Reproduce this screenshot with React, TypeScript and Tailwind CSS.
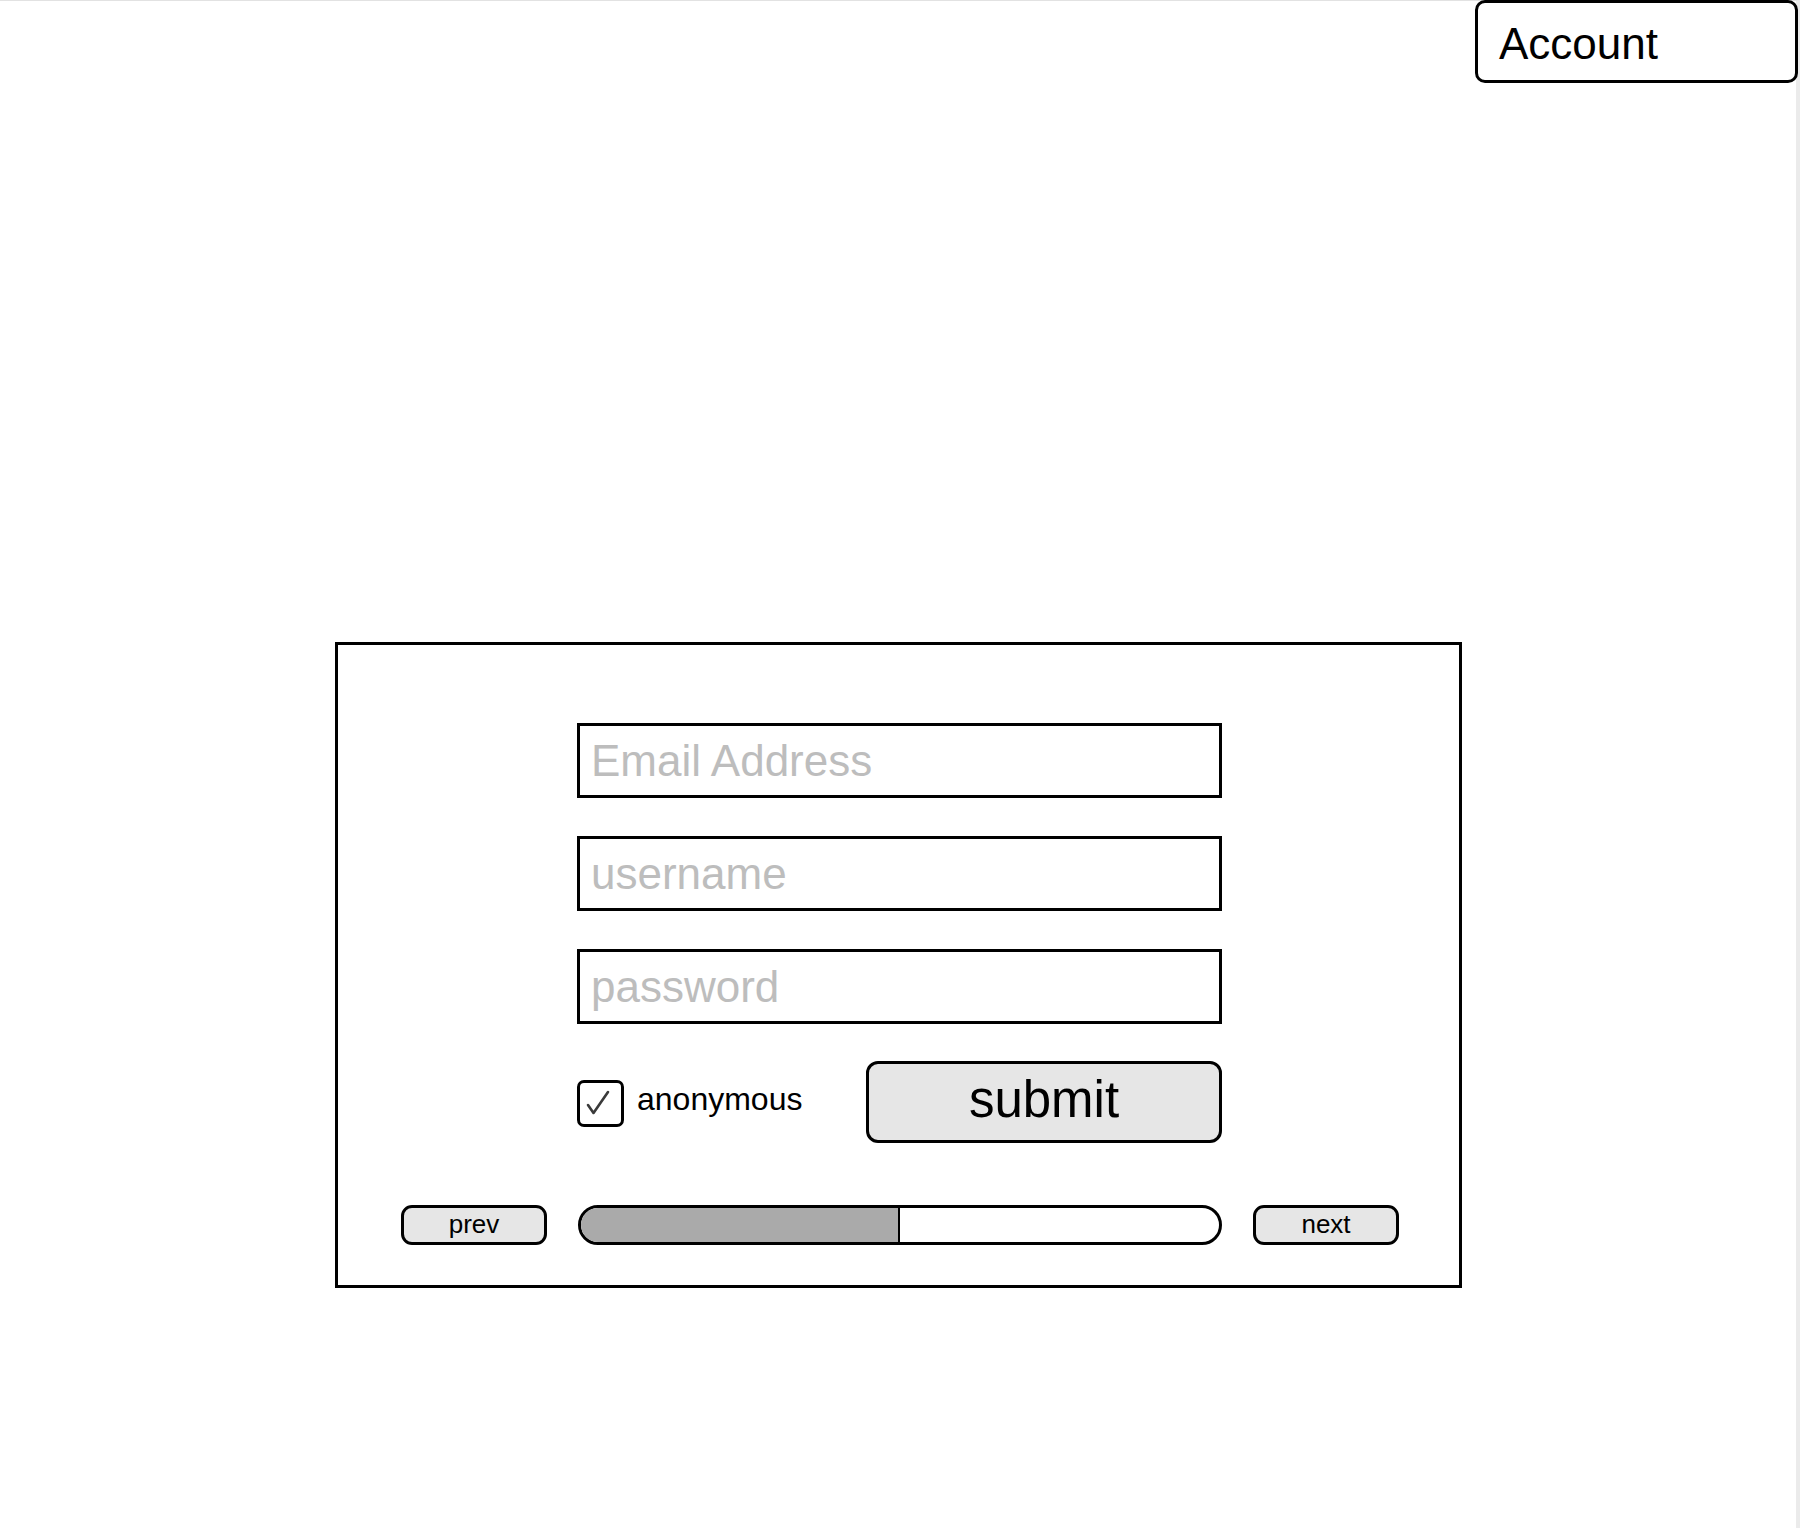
import React from 'react';

const font = { fontFamily: '"Liberation Sans", Arial, sans-serif' };

const TextField = ({ placeholder }: { placeholder: string }) => (
    <input
        type="text"
        placeholder={placeholder}
        className="w-[645px] h-[75px] border-[3px] border-black bg-white pl-[11px] text-[44px] text-black placeholder:text-[#bdbdbd] outline-none"
        style={font}
    />
);

const SmallButton = ({ label }: { label: string }) => (
    <button className="w-[146px] h-[40px] shrink-0 border-[3px] border-black rounded-[11px] bg-[#e6e6e6] text-[26px] leading-none text-black flex items-center justify-center pb-[2px]">
        {label}
    </button>
);

export default function App() {
    const [anon, setAnon] = React.useState(true);
    const progress = 50;

    return (
        <div className="w-full h-[1528px] bg-white border-t border-[#e2e2e2] border-r-4 border-r-[#ebebeb] flex flex-col" style={font}>
            {/* Header */}
            <div className="flex justify-end h-[81px]">
                <button className="w-[323px] h-[83px] -mt-px -mr-[2px] border-[3px] border-black rounded-[10px] bg-white flex items-center pl-[21px] pt-[4px] text-[44px] text-black">
                    Account
                </button>
            </div>

            {/* Form panel */}
            <div className="ml-[335px] mt-[560px] w-[1127px] h-[646px] border-[3px] border-black flex flex-col">
                <div className="ml-[239px] mt-[78px] w-[645px] flex flex-col gap-[38px]">
                    <TextField placeholder="Email Address" />
                    <TextField placeholder="username" />
                    <TextField placeholder="password" />

                    <div className="flex justify-between items-start -mt-[1px]">
                        <label className="flex items-start gap-[13px] mt-[19px] cursor-pointer" onClick={() => setAnon(!anon)}>
                            <span className="w-[47px] h-[47px] border-[3px] border-black rounded-[7px] bg-white flex items-center justify-center">
                                {anon && (
                                    <svg width="41" height="41" viewBox="0 0 41 41" fill="none">
                                        <polyline points="8,22 13.5,30 28,9" stroke="#3a3a3a" strokeWidth="2.6" strokeLinecap="round" strokeLinejoin="round" />
                                    </svg>
                                )}
                            </span>
                            <span className="text-[32px] leading-[36px] mt-[1px] text-black">anonymous</span>
                        </label>
                        <button className="w-[356px] h-[82px] border-[3px] border-black rounded-[12px] bg-[#e6e6e6] text-[51px] leading-none text-black flex items-center justify-center pb-[6px]">
                            submit
                        </button>
                    </div>
                </div>

                {/* Pager */}
                <div className="mt-[62px] pl-[63px] flex items-center gap-[31px]">
                    <SmallButton label="prev" />
                    <div className="w-[644px] h-[40px] border-[3px] border-black rounded-full bg-white overflow-hidden flex">
                        <div className="h-full bg-[#aaaaaa] border-r-2 border-black" style={{ width: `${progress}%` }} />
                    </div>
                    <SmallButton label="next" />
                </div>
            </div>
        </div>
    );
}
